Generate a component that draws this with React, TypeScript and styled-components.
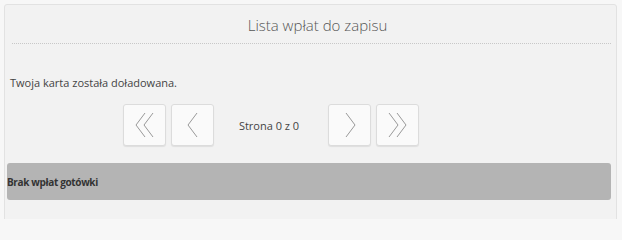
import React from "react";
import styled, { createGlobalStyle } from "styled-components";

const Global = createGlobalStyle`
  html, body { margin: 0; padding: 0; background: #f7f7f7; height: 219px; overflow: hidden; }
  body { font-family: "Open Sans", "Noto Sans", sans-serif; }
`;

const Page = styled.div`
  width: 622px;
  height: 219px;
  padding: 4px 5px 0 4px;
  box-sizing: border-box;
  overflow: hidden;
`;

const Panel = styled.div`
  background: #f2f2f2;
  border: 1px solid #e2e2e2;
  border-radius: 3px;
  height: 230px;
  padding: 0 5px 0 2px;
  box-sizing: border-box;
`;

const Title = styled.div`
  text-align: center;
  font-size: 15px;
  color: #555;
  font-weight: 300;
  padding: 10px 0 8px 12px;
  line-height: 20px;
  border-bottom: 1px dotted #c8c8c8;
  margin: 0 0 0 5px;
`;

const Message = styled.div`
  font-size: 11px;
  color: #444;
  padding: 32px 0 0 3px;
  line-height: 14px;
`;

const Pager = styled.div`
  display: flex;
  align-items: center;
  margin: 14px 0 0 116px;
  gap: 5px;
`;

const PageButton = styled.button`
  box-sizing: border-box;
  width: 43px;
  height: 42px;
  background: #fafafa;
  border: 1px solid #dcdcdc;
  border-radius: 3px;
  box-shadow: 0 1px 1px rgba(0, 0, 0, 0.08);
  display: flex;
  align-items: center;
  justify-content: center;
  padding: 0;
  svg { display: block; }
`;

const PageInfo = styled.div`
  box-sizing: border-box;
  width: 104px;
  text-align: center;
  font-size: 11px;
  color: #444;
  padding-right: 4px;
`;

const Empty = styled.div`
  margin: 17px 0 0 0;
  background: #b4b4b4;
  border-radius: 3px;
  height: 37px;
  display: flex;
  align-items: center;
  font-size: 10px;
  letter-spacing: -0.35px;
  font-weight: 700;
  color: #333;
  padding-top: 1px;
  box-sizing: border-box;
`;

type Dir = "first" | "prev" | "next" | "last";

const Chevron = ({ dir }: { dir: Dir }) => {
  const stroke = "#999";
  const single = (x: number, left: boolean) =>
    left ? `M${x + 9} 2 L${x} 14 L${x + 9} 26` : `M${x} 2 L${x + 9} 14 L${x} 26`;
  let d = "";
  if (dir === "first") d = `${single(1, true)} ${single(9, true)}`;
  if (dir === "prev") d = single(5, true);
  if (dir === "next") d = single(6, false);
  if (dir === "last") d = `${single(1, false)} ${single(9, false)}`;
  return (
    <svg width="20" height="28" viewBox="0 0 20 28">
      <path d={d} fill="none" stroke={stroke} strokeWidth="1" />
    </svg>
  );
};

export default function App() {
  return (
    <>
      <Global />
      <Page>
        <Panel>
          <Title>Lista wpłat do zapisu</Title>
          <Message>Twoja karta została doładowana.</Message>
          <Pager>
            <PageButton><Chevron dir="first" /></PageButton>
            <PageButton><Chevron dir="prev" /></PageButton>
            <PageInfo>Strona 0 z 0</PageInfo>
            <PageButton><Chevron dir="next" /></PageButton>
            <PageButton><Chevron dir="last" /></PageButton>
          </Pager>
          <Empty>Brak wpłat gotówki</Empty>
        </Panel>
      </Page>
    </>
  );
}
